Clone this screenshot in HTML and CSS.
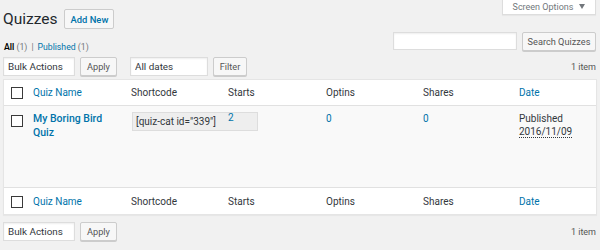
FILE: index.html
```html
<!DOCTYPE html>
<html lang="en">
<head>
<meta charset="utf-8">
<title>Quizzes</title>
<link rel="stylesheet" href="styles.css">
</head>
<body>
<div class="wrap">
  <div class="top">
    <div class="title-group">
      <h1>Quizzes</h1>
      <a class="add-new" href="#">Add New</a>
    </div>
    <button class="screen-tab" type="button">Screen Options <svg class="caret" width="6" height="5" viewBox="0 0 6 5"><polygon points="0,0 6,0 3,5" fill="#72777c"/></svg></button>
  </div>

  <div class="views-row">
    <ul class="subsubsub">
      <li><a class="current" href="#">All <span class="count">(1)</span></a><span class="sep">|</span></li>
      <li><a href="#">Published <span class="count">(1)</span></a></li>
    </ul>
    <div class="search-box">
      <input class="search-input" type="search" aria-label="Search Quizzes">
      <button class="button search-btn" type="button">Search Quizzes</button>
    </div>
  </div>

  <div class="tablenav top-nav">
    <div class="actions">
      <select class="select bulk"><option>Bulk Actions</option></select>
      <button class="button apply" type="button">Apply</button>
      <select class="select dates"><option>All dates</option></select>
      <button class="button filter" type="button">Filter</button>
    </div>
    <span class="displaying-num">1 item</span>
  </div>

  <table class="list">
    <thead>
      <tr>
        <th class="col-cb"><span class="cb"></span></th>
        <th class="col-name"><a href="#">Quiz Name</a></th>
        <th class="col-code">Shortcode</th>
        <th class="col-num1">Starts</th>
        <th class="col-num2">Optins</th>
        <th class="col-num3">Shares</th>
        <th class="col-date"><a href="#">Date</a></th>
      </tr>
    </thead>
    <tbody>
      <tr>
        <td class="cell-cb"><span class="cb"></span></td>
        <td class="cell-name"><a href="#">My Boring Bird Quiz</a></td>
        <td class="cell-code"><span class="code-box">[quiz-cat id="339"]</span></td>
        <td class="cell-num"><a class="num-link" href="#">2</a></td>
        <td class="cell-num"><a href="#">0</a></td>
        <td class="cell-num"><a href="#">0</a></td>
        <td class="cell-date">Published<br><abbr title="2016/11/09">2016/11/09</abbr></td>
      </tr>
    </tbody>
    <tfoot>
      <tr>
        <th class="col-cb"><span class="cb"></span></th>
        <th><a href="#">Quiz Name</a></th>
        <th>Shortcode</th>
        <th>Starts</th>
        <th>Optins</th>
        <th>Shares</th>
        <th><a href="#">Date</a></th>
      </tr>
    </tfoot>
  </table>

  <div class="tablenav bottom-nav">
    <div class="actions">
      <select class="select bulk"><option>Bulk Actions</option></select>
      <button class="button apply" type="button">Apply</button>
    </div>
    <span class="displaying-num">1 item</span>
  </div>
</div>
</body>
</html>
```

FILE: styles.css
```css
* { box-sizing: border-box; }
html, body { margin: 0; padding: 0; }
body {
  background: #f1f1f1;
  font-family: Roboto, "Liberation Sans", sans-serif;
  color: #32373c;
  font-size: 10px;
  width: 600px;
  height: 250px;
  overflow: hidden;
}
a { color: #0073aa; text-decoration: none; }

.wrap { padding: 0 4px 0 3px; }

/* top header */
.top { display: flex; align-items: flex-start; height: 32px; }
.title-group { display: flex; align-items: center; padding-top: 9px; }
h1 {
  margin: 0;
  font-size: 15.5px;
  font-weight: 400;
  line-height: 20px;
  color: #23282d;
}
.add-new {
  margin-left: 7px;
  width: 50px;
  height: 20px;
  display: flex;
  align-items: center;
  justify-content: center;
  border: 1px solid #ccc;
  border-radius: 2px;
  background: #f7f7f7;
  font-size: 9.4px;
  font-weight: 500;
  color: #0073aa;
}
.screen-tab {
  margin-left: auto;
  width: 94px;
  height: 16px;
  margin-top: -1px;
  display: flex;
  align-items: center;
  justify-content: center;
  gap: 6px;
  padding: 0;
  background: #fff;
  border: 1px solid #ddd;
  border-top: none;
  box-shadow: 0 1px 1px rgba(0,0,0,.04);
  font-family: inherit;
  font-size: 9px;
  color: #72777c;
}
.caret { display: block; }

/* views + search */
.views-row { display: flex; justify-content: space-between; align-items: flex-start; height: 19px; }
.subsubsub {
  list-style: none;
  margin: 9px 0 0 1px;
  padding: 0;
  display: flex;
  font-size: 8.7px;
  line-height: 12px;
  color: #72777c;
}
.subsubsub .current { color: #000; font-weight: 600; }
.subsubsub .count { color: #72777c; font-weight: 400; }
.subsubsub .sep { margin: 0 4px; color: #72777c; }
.search-box { display: flex; gap: 5px; align-items: flex-start; }
.search-input {
  width: 124px;
  height: 18px;
  margin: 0;
  border: 1px solid #ddd;
  background: #fff;
  box-shadow: inset 0 1px 2px rgba(0,0,0,.07);
  padding: 0 3px;
  font-family: inherit;
}

/* buttons */
.button {
  height: 19px;
  margin: 0;
  padding: 0;
  border: 1px solid #ccc;
  border-radius: 2px;
  background: #f7f7f7;
  box-shadow: 0 1px 0 #ccc;
  font-family: inherit;
  font-size: 9.2px;
  color: #555;
  line-height: 17px;
  white-space: nowrap;
  display: flex;
  align-items: center;
  justify-content: center;
}
.search-btn { width: 74px; }
.apply { width: 37px; }
.filter { width: 34px; }

/* tablenav */
.tablenav { display: flex; align-items: center; justify-content: space-between; height: 19px; }
.top-nav { margin-top: 6px; }
.bottom-nav { margin-top: 7px; }
.actions { display: flex; align-items: flex-start; }
.select {
  -webkit-appearance: none;
  appearance: none;
  height: 19px;
  margin: 0;
  padding: 0 4px;
  border: 1px solid #ddd;
  border-radius: 0;
  background: #fff;
  box-shadow: inset 0 1px 2px rgba(0,0,0,.07);
  font-family: inherit;
  font-size: 9.9px;
  color: #32373c;
}
.bulk { width: 72px; margin-right: 5px; }
.dates { width: 78px; margin-left: 13px; margin-right: 5px; }
.displaying-num { font-size: 9px; color: #555; }

/* table */
.list {
  margin-top: 3px;
  width: 594px;
  table-layout: fixed;
  border-collapse: separate;
  border-spacing: 0;
  border: 1px solid #e5e5e5;
  box-shadow: 0 1px 1px rgba(0,0,0,.04);
  background: #fff;
}
.list th {
  padding: 0 6px;
  text-align: left;
  font-weight: 400;
  font-size: 10px;
  color: #32373c;
  vertical-align: middle;
}
.list thead th { border-bottom: 1px solid #e1e1e1; height: 26px; }
.list tfoot th { border-top: 1px solid #e1e1e1; height: 27px; }
.col-cb { width: 23px; }
.col-name { width: 98px; }
.col-code { width: 97px; }
.col-num1 { width: 98px; }
.col-num2 { width: 97px; }
.col-num3 { width: 96px; }
.list th.col-cb { padding: 0 0 0 7px; }
.cb {
  display: block;
  width: 12px;
  height: 12px;
  border: 1px solid #3a3a3a;
  background: #fff;
}
.list thead .cb, .list tfoot .cb { margin-top: 1px; }

.list td {
  background: #f9f9f9;
  height: 81px;
  vertical-align: top;
  padding: 6px 6px 0;
  font-size: 10px;
  line-height: 13px;
}
.list td.cell-cb { padding: 9px 0 0 7px; }
.list td.cell-name { line-height: 14px; font-weight: 500; font-size: 10.5px; }
.code-box {
  position: relative;
  display: block;
  width: 126px;
  height: 19px;
  margin-left: 1px;
  padding: 0 3px;
  border: 1px solid #ddd;
  background: #eee;
  font-size: 10px;
  line-height: 17px;
  white-space: nowrap;
  color: #32373c;
}
.num-link { position: relative; }
.list td.cell-num:nth-child(4) { line-height: 11px; }
.cell-date abbr { text-decoration: none; border-bottom: 1px dotted #32373c; }
```
